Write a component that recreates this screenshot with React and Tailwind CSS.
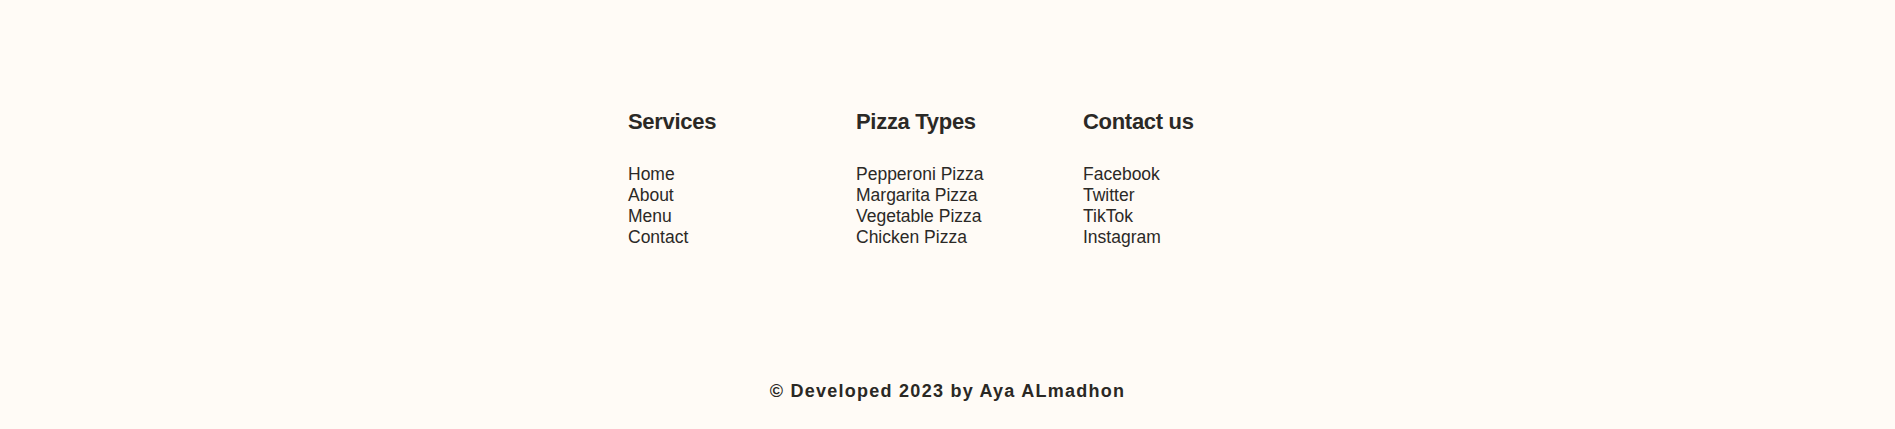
const columns = [
  { title: 'Services', links: ['Home', 'About', 'Menu', 'Contact'] },
  { title: 'Pizza Types', links: ['Pepperoni Pizza', 'Margarita Pizza', 'Vegetable Pizza', 'Chicken Pizza'] },
  { title: 'Contact us', links: ['Facebook', 'Twitter', 'TikTok', 'Instagram'] },
];

const App = () => {
  return (
    <div className="min-h-screen bg-[#fffbf6] text-[#2b2926] font-['Liberation_Sans',Arial,sans-serif]">
      <footer className="pt-[105px]">
        <div className="mx-auto w-[639px] grid grid-cols-[228px_227px_auto]">
          {columns.map((col) => (
            <div key={col.title}>
              <h3 className="text-[22px] leading-[33px] font-bold tracking-[-0.3px]">{col.title}</h3>
              <ul className="mt-[26px]">
                {col.links.map((link) => (
                  <li key={link} className="text-[17.5px] leading-[21px]">
                    <a href="#">{link}</a>
                  </li>
                ))}
              </ul>
            </div>
          ))}
        </div>

        <p className="mt-[130px] text-center text-[18px] leading-[27px] font-bold tracking-[1.25px] text-[#2a2824]">
          © Developed 2023 by Aya ALmadhon
        </p>
      </footer>
    </div>
  );
};

export default App;
